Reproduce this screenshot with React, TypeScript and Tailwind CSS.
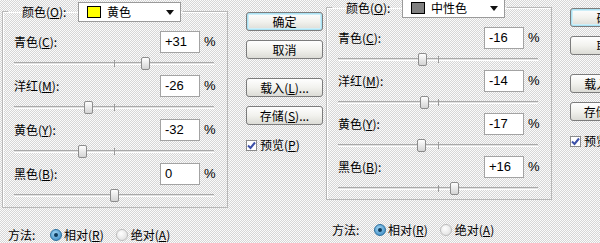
import React from 'react';

type Row = { name: string; key: string; value: number };

const FONT = '"Noto Sans CJK SC", "Liberation Sans", sans-serif';

const Label: React.FC<{ name: string; k: string; colon?: boolean }> = ({ name, k, colon }) => (
    <span className="whitespace-nowrap">
        {name}(<u>{k}</u>){colon ? ':' : ''}
    </span>
);

const Btn: React.FC<{ children: React.ReactNode; primary?: boolean; className?: string }> = ({ children, primary, className }) => (
    <div
        className={
            'h-[19px] w-[77px] shrink-0 rounded-[3px] border border-[#7c7c7c] bg-gradient-to-b from-white via-[#f2f2ee] to-[#dcdcd6] flex items-center justify-center text-[12px] leading-none ' +
            (primary ? 'shadow-[inset_0_0_0_1px_#a9e2f3,inset_0_0_0_2px_#cdeef8] ' : '') +
            (className || '')
        }
    >
        {children}
    </div>
);

const Slider: React.FC<{ value: number }> = ({ value }) => (
    <div className="relative w-[200px] h-[22px]">
        <div className="absolute left-0 right-0 top-[9px] h-[3px] border-t border-[#a9a9a9] border-b border-b-white bg-[#e2e2e2]" />
        <div className="absolute left-[100px] top-[7px] w-px h-[7px] bg-[#9a9a9a]" />
        <div
            className="absolute top-[4px] w-[9px] h-[13px] -ml-[4px] rounded-[2px] border border-[#8c8c8c] bg-gradient-to-b from-white to-[#d4d4d4]"
            style={{ left: 100 + value }}
        />
    </div>
);

const Dialog: React.FC<{
    rows: Row[];
    swatch: string;
    swatchName: string;
    rowH: string;
    shift: string;
    methodGap: string;
}> = ({ rows, swatch, swatchName, rowH, shift, methodGap }) => (
    <div className={'shrink-0 w-[324px] pl-[2px] ' + shift}>
        <div className="flex">
            <fieldset className="w-[226px] shrink-0 border border-[#b8b8b8] shadow-[inset_1px_1px_0_#fff]">
                <legend className="ml-[5px] pr-[2px] flex items-center pt-[2px]">
                    <span className="pl-[14px] w-[70px]">
                        <Label name="颜色" k="O" colon />
                    </span>
                    <div className="h-[20px] w-[103px] border border-[#9a9a9a] bg-white flex items-center pl-[8px] pr-[6px]">
                        <div className="w-[14px] h-[12px] border border-black" style={{ background: swatch }} />
                        <span className="ml-[6px] flex-1">{swatchName}</span>
                        <svg width="8" height="5" viewBox="0 0 8 5">
                            <path d="M0 0 H8 L4 5 Z" fill="#111" />
                        </svg>
                    </div>
                </legend>
                <div className="pl-[11px] pt-[9px]">
                    {rows.map((r) => (
                        <div key={r.key} className={rowH}>
                            <div className="flex items-center h-[22px]">
                                <span className="w-[146px]">
                                    <Label name={r.name} k={r.key} colon />
                                </span>
                                <div className="w-[40px] h-[22px] border border-[#a3a3a3] bg-white flex items-center pl-[4px] text-[13px] font-['Liberation_Sans',sans-serif]">
                                    {r.value > 0 ? '+' + r.value : r.value}
                                </div>
                                <span className="ml-[4px] text-[13px] font-['Liberation_Sans',sans-serif]">%</span>
                            </div>
                            <Slider value={r.value} />
                        </div>
                    ))}
                </div>
            </fieldset>
            <div className="ml-[18px] pt-[12px] flex flex-col">
                <Btn primary>确定</Btn>
                <Btn className="mt-[9px]">取消</Btn>
                <Btn className="mt-[19px]">
                    <Label name="载入" k="L" />
                    ...
                </Btn>
                <Btn className="mt-[9px]">
                    <Label name="存储" k="S" />
                    ...
                </Btn>
                <div className="mt-[13px] flex items-center">
                    <div className="w-[11px] h-[11px] border border-[#8a8a8a] bg-white flex items-center justify-center">
                        <svg width="9" height="9" viewBox="0 0 9 9">
                            <path d="M1 4.5 L3.5 7 L8 1.5" stroke="#3b4fa8" strokeWidth="2" fill="none" />
                        </svg>
                    </div>
                    <span className="ml-[3px]">
                        <Label name="预览" k="P" />
                    </span>
                </div>
            </div>
        </div>
        <div className={'pl-[6px] flex items-center h-[16px] ' + methodGap}>
            <span className="w-[42px]">方法:</span>
            <div className="w-[12px] h-[12px] rounded-full border border-[#2a6f9e] bg-[radial-gradient(circle_at_40%_35%,#9fd3f1,#2f82bf)] flex items-center justify-center">
                <div className="w-[4px] h-[4px] rounded-full bg-[#0d3a5c]" />
            </div>
            <span className="ml-[2px]">
                <Label name="相对" k="R" />
            </span>
            <div className="ml-[12px] w-[12px] h-[12px] rounded-full border border-[#bdbdbd] bg-[radial-gradient(circle_at_40%_35%,#fff,#dadada)]" />
            <span className="ml-[3px]">
                <Label name="绝对" k="A" />
            </span>
        </div>
    </div>
);

export default function App() {
    return (
        <div
            className="w-[600px] h-[243px] overflow-hidden flex text-[12px] leading-[14px] text-black bg-[image:repeating-conic-gradient(#d6d6d6_0_25%,#fbfbfb_0_50%)] bg-[length:2px_2px]"
            style={{ fontFamily: FONT }}
        >
            <Dialog
                swatch="#ffff00"
                swatchName="黄色"
                rowH="h-[44px]"
                shift=""
                methodGap="mt-[19px]"
                rows={[
                    { name: '青色', key: 'C', value: 31 },
                    { name: '洋红', key: 'M', value: -26 },
                    { name: '黄色', key: 'Y', value: -32 },
                    { name: '黑色', key: 'B', value: 0 },
                ]}
            />
            <Dialog
                swatch="#808080"
                swatchName="中性色"
                rowH="h-[43px]"
                shift="-mt-[4px]"
                methodGap="mt-[22px]"
                rows={[
                    { name: '青色', key: 'C', value: -16 },
                    { name: '洋红', key: 'M', value: -14 },
                    { name: '黄色', key: 'Y', value: -17 },
                    { name: '黑色', key: 'B', value: 16 },
                ]}
            />
        </div>
    );
}
